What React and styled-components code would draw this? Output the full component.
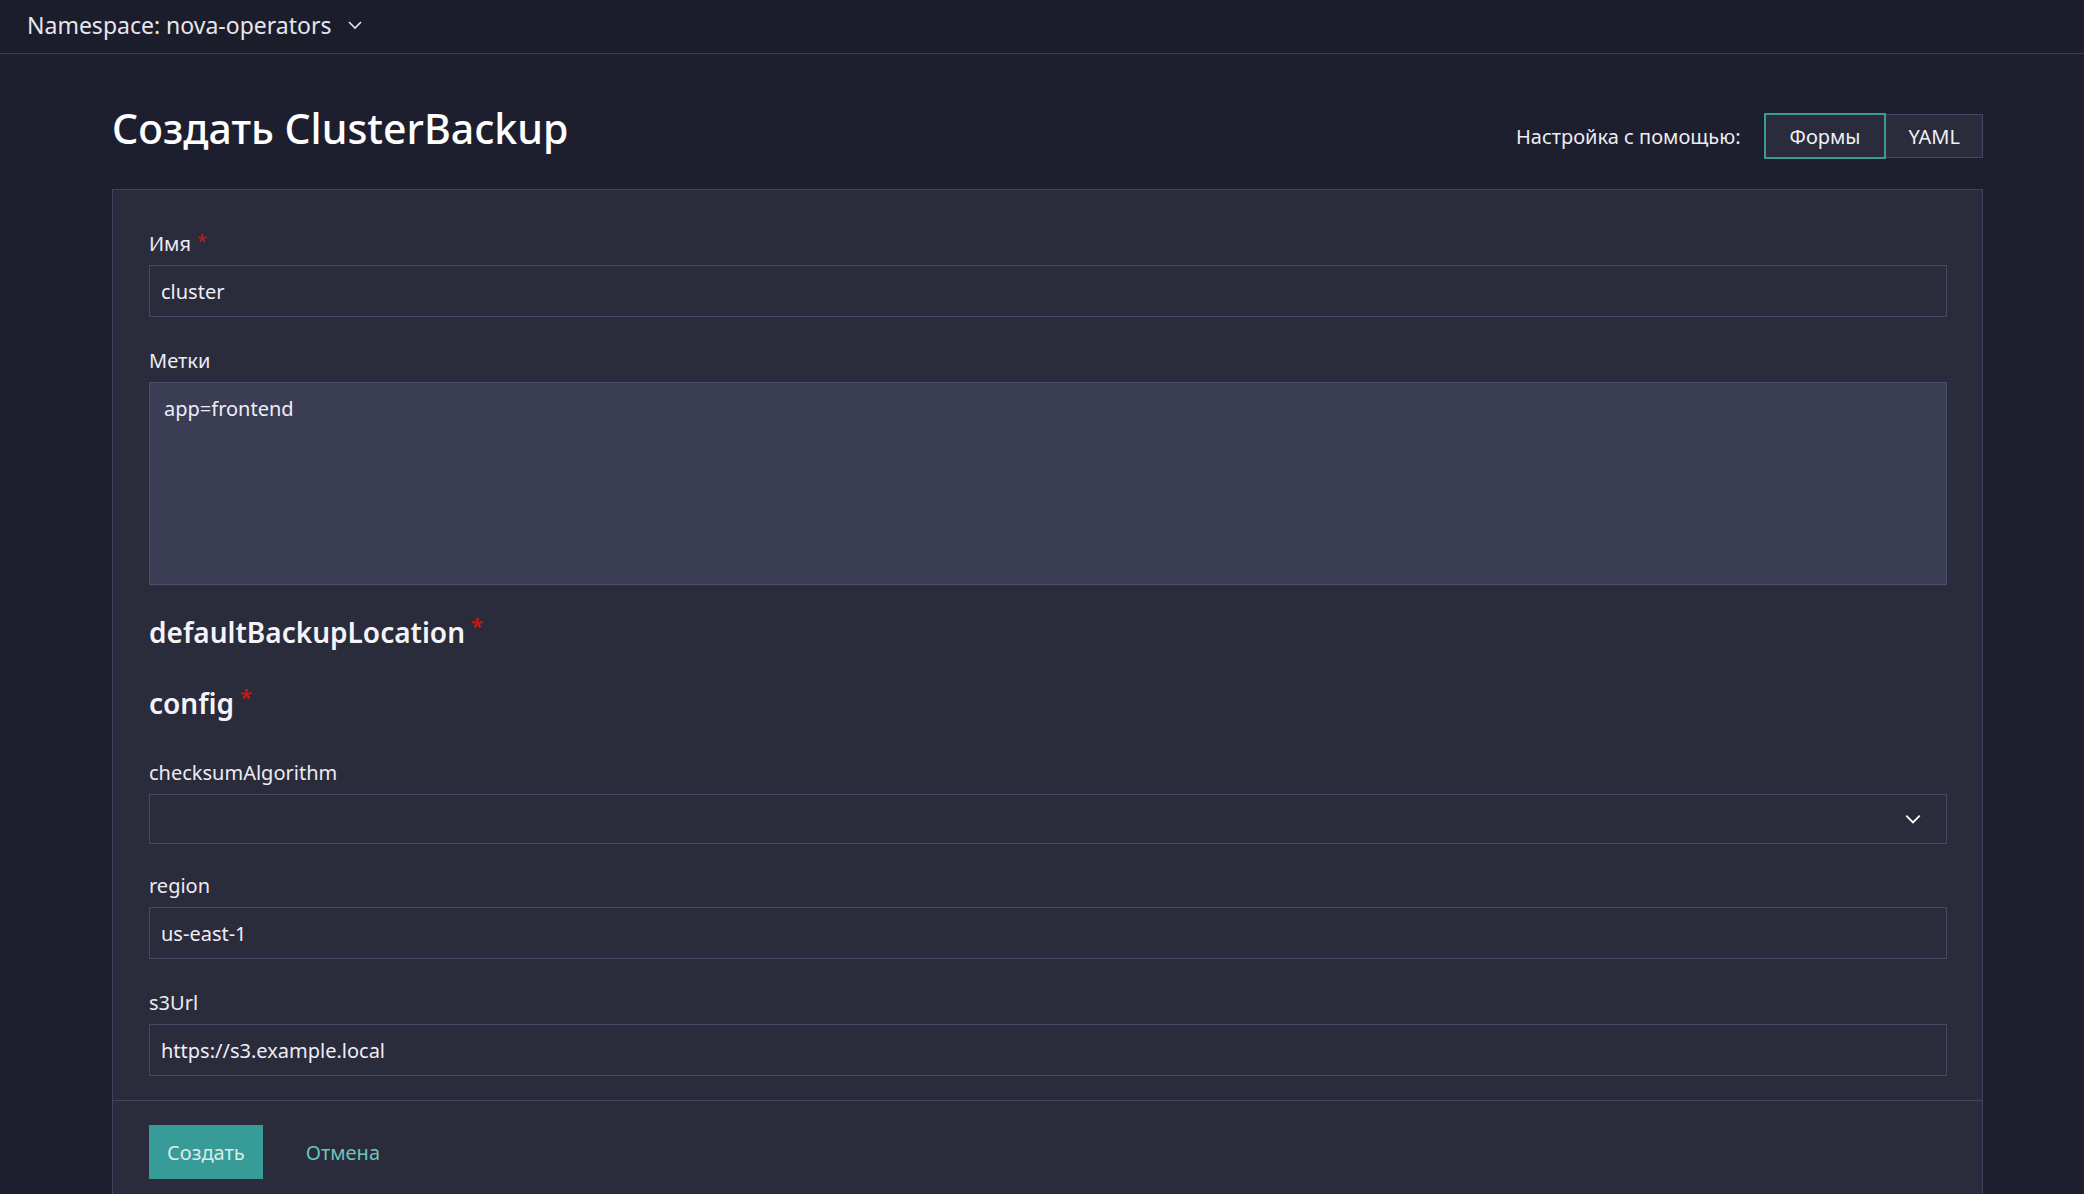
import styled, { createGlobalStyle } from "styled-components";

const GlobalStyle = createGlobalStyle`
  * {
    box-sizing: border-box;
  }

  body {
    margin: 0;
    background: #1e1f2e;
    color: #ececf3;
    font-family: "Noto Sans", "Open Sans", sans-serif;
  }
`;

const TopBar = styled.header`
  height: 54px;
  display: flex;
  align-items: center;
  gap: 16px;
  padding: 0 0 4px 27px;
  background: #1c1d2b;
  border-bottom: 1px solid #3b3d54;
`;

const NamespaceText = styled.span`
  font-size: 23px;
  color: #e6e6ee;
`;

const Page = styled.main`
  padding: 0 101px 0 112px;
`;

const Header = styled.div`
  display: flex;
  align-items: flex-start;
  justify-content: space-between;
  padding: 50px 0 30px;
`;

const Title = styled.h1`
  margin: 0;
  font-size: 41px;
  line-height: 48px;
  font-weight: 500;
  color: #ffffff;
`;

const Toggle = styled.div`
  display: flex;
  align-items: center;
  margin-top: 9px;
`;

const ToggleLabel = styled.span`
  font-size: 20px;
  color: #ececf3;
  margin-right: 23px;
`;

const ToggleButton = styled.button`
  font-family: inherit;
  font-size: 20px;
  color: #f0f0f5;
  background: #2a2b3b;
  cursor: pointer;
  height: ${(p) => (p.$active ? "46px" : "44px")};
  padding: 0 ${(p) => (p.$active ? "24px" : "22px")};
  border: ${(p) => (p.$active ? "2px solid #3a9a94" : "1px solid #454866")};
  ${(p) => !p.$active && "border-left: none;"}
`;

const Panel = styled.section`
  background: #2a2b3b;
  border: 1px solid #3f4260;
  border-bottom: none;
`;

const Body = styled.div`
  padding: 41px 35px 24px 36px;
`;

const Field = styled.div`
  display: flex;
  flex-direction: column;
  gap: 8px;
  margin-bottom: ${(p) => p.$mb ?? 31}px;
`;

const Label = styled.label`
  font-size: 20px;
  line-height: 26px;
  color: #ececf3;
`;

const Required = styled.span`
  position: relative;
  top: ${(p) => (p.$big ? "-9px" : "-3px")};
  margin-left: 6px;
  color: #c9190b;
  font-size: ${(p) => (p.$big ? "22px" : "18px")};
  line-height: 0;
`;

const Input = styled.input`
  height: 52px;
  width: 100%;
  padding: 0 11px;
  font-family: inherit;
  font-size: 20px;
  color: #eeeef4;
  background: #2a2b3b;
  border: 1px solid #454a66;
  outline: none;
`;

const TextArea = styled.textarea`
  display: block;
  height: 203px;
  width: 100%;
  padding: 13px 14px;
  font-family: inherit;
  font-size: 20px;
  line-height: 26px;
  color: #eeeef4;
  background: #3b3d55;
  border: 1px solid #4b4e6c;
  resize: none;
  outline: none;
`;

const SelectBox = styled.div`
  height: 50px;
  display: flex;
  align-items: center;
  justify-content: flex-end;
  padding-right: 24px;
  background: #2a2b3b;
  border: 1px solid #454a66;
`;

const SectionTitle = styled.h2`
  margin: 0 0 ${(p) => p.$mb}px;
  font-size: 28px;
  line-height: 36px;
  font-weight: 600;
  color: #f4f4f8;
`;

const Footer = styled.div`
  display: flex;
  align-items: center;
  gap: 43px;
  padding: 24px 36px 40px;
  border-top: 1px solid #43465f;
`;

const PrimaryButton = styled.button`
  height: 54px;
  padding: 0 18px;
  font-family: inherit;
  font-size: 20px;
  color: #dcebea;
  background: #379b97;
  border: none;
`;

const LinkButton = styled.button`
  padding: 0;
  font-family: inherit;
  font-size: 20px;
  color: #6cc4ba;
  background: none;
  border: none;
`;

function Chevron({ size = 16, color = "#e6e6ee" }) {
  return (
    <svg width={size} height={size} viewBox="0 0 16 16" fill="none">
      <path d="M2 5l6 6 6-6" stroke={color} strokeWidth="1.6" />
    </svg>
  );
}

export default function App() {
  return (
    <>
      <GlobalStyle />
      <TopBar>
        <NamespaceText>Namespace: nova-operators</NamespaceText>
        <Chevron />
      </TopBar>
      <Page>
        <Header>
          <Title>Создать ClusterBackup</Title>
          <Toggle>
            <ToggleLabel>Настройка с помощью:</ToggleLabel>
            <ToggleButton $active>Формы</ToggleButton>
            <ToggleButton>YAML</ToggleButton>
          </Toggle>
        </Header>
        <Panel>
          <Body>
            <Field>
              <Label>
                Имя<Required>*</Required>
              </Label>
              <Input defaultValue="cluster" />
            </Field>
            <Field $mb={29}>
              <Label>Метки</Label>
              <TextArea defaultValue="app=frontend" />
            </Field>
            <SectionTitle $mb={35}>
              defaultBackupLocation<Required $big>*</Required>
            </SectionTitle>
            <SectionTitle $mb={39}>
              config<Required $big>*</Required>
            </SectionTitle>
            <Field $mb={29}>
              <Label>checksumAlgorithm</Label>
              <SelectBox>
                <Chevron size={18} color="#ffffff" />
              </SelectBox>
            </Field>
            <Field>
              <Label>region</Label>
              <Input defaultValue="us-east-1" />
            </Field>
            <Field $mb={0}>
              <Label>s3Url</Label>
              <Input defaultValue="https://s3.example.local" />
            </Field>
          </Body>
          <Footer>
            <PrimaryButton>Создать</PrimaryButton>
            <LinkButton>Отмена</LinkButton>
          </Footer>
        </Panel>
      </Page>
    </>
  );
}
